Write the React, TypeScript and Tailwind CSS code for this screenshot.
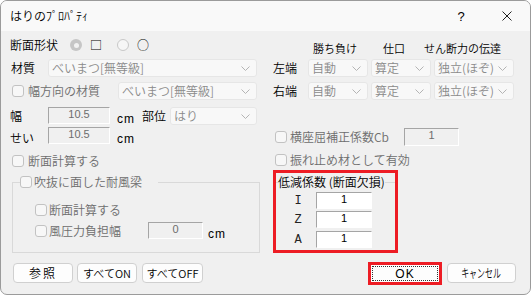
import React from "react";

function Chevron() {
  return (
    <svg width="9" height="5" viewBox="0 0 9 5" className="shrink-0">
      <path d="M0.5 0.5 L4.5 4.5 L8.5 0.5" fill="none" stroke="#b4b4b4" strokeWidth="1" />
    </svg>
  );
}

function Select({ text, className }: { text: string; className: string }) {
  return (
    <div
      className={`flex items-center justify-between bg-[#f8f8f8] border border-[#e6e6e6] rounded-[3px] pl-[3px] pr-[6px] text-[#8a8a8a] shrink-0 ${className}`}
    >
      <span className="whitespace-nowrap">{text}</span>
      <Chevron />
    </div>
  );
}

function Box() {
  return <span className="inline-block w-[12px] h-[12px] rounded-[3px] border border-[#c2c2c2] bg-[#f7f7f7] shrink-0" />;
}

function GrayField({ v, className }: { v: string; className: string }) {
  return (
    <div
      className={`flex justify-center items-start border border-t-[#a5a5a5] border-l-[#a5a5a5] border-r-[#ffffff] border-b-[#ffffff] bg-[#f0f0f0] text-[#6d6d6d] font-['Liberation_Sans',sans-serif] text-[11px] leading-[11px] pt-[1px] shrink-0 ${className}`}
    >
      {v}
    </div>
  );
}

function WhiteField({ v }: { v: string }) {
  return (
    <div className="flex justify-center items-start w-[56px] h-[17px] border border-t-[#a5a5a5] border-l-[#a5a5a5] border-r-[#ffffff] border-b-[#ffffff] bg-white text-black font-['Liberation_Sans',sans-serif] text-[11px] leading-[11px] pt-[1px] ml-[7px] shrink-0">
      {v}
    </div>
  );
}

function Btn({ label, className }: { label: React.ReactNode; className: string }) {
  return (
    <div
      className={`h-[20px] bg-[#fdfdfd] border border-[#d0d0d0] rounded-[4px] flex items-center justify-center text-black shrink-0 ${className}`}
    >
      {label}
    </div>
  );
}

function Cm() {
  return (
    <span className="font-['Liberation_Sans',sans-serif] text-[12px] tracking-[1px] mt-[6px] w-[25px] ml-[7px] shrink-0">cm</span>
  );
}

export default function App() {
  return (
    <div className="w-[531px] h-[295px] bg-[#f0f0f0] border border-[#9b9b9b] rounded-[7px] overflow-hidden flex flex-col font-['Noto_Sans_CJK_JP',sans-serif] font-[350] text-[12px] leading-none text-black">
      {/* title bar */}
      <div className="h-[30px] bg-[#f9f9f9] flex items-center shrink-0">
        <span className="pl-[9px] text-[12px]">はりのﾌﾟﾛﾊﾟﾃｨ</span>
        <div className="ml-auto flex h-full">
          <div className="w-[46px] h-full flex items-center justify-center text-[13px] font-['Liberation_Sans',sans-serif]">?</div>
          <div className="w-[46px] h-full flex items-center justify-center">
            <svg width="10" height="10" viewBox="0 0 10 10">
              <path d="M0.5 0.5 L9.5 9.5 M9.5 0.5 L0.5 9.5" stroke="#222" strokeWidth="1" />
            </svg>
          </div>
        </div>
      </div>

      {/* body */}
      <div className="flex flex-col pt-[5px]">
        <div className="flex">
          {/* left column */}
          <div className="w-[251px] ml-[9px] flex flex-col">
            <div className="h-[18px] flex items-center">
              <span className="w-[60px]">断面形状</span>
              <span className="w-[12px] h-[12px] rounded-full bg-[#c6c6c6] flex items-center justify-center shrink-0">
                <span className="w-[5px] h-[5px] rounded-full bg-[#f2f2f2]" />
              </span>
              <span className="ml-[8px] w-[27px] text-[12px]">□</span>
              <span className="w-[12px] h-[12px] rounded-full border border-[#c8c8c8] bg-[#f6f6f6] shrink-0" />
              <span className="ml-[8px] text-[12px]">○</span>
            </div>
            <div className="mt-[5px] h-[18px] flex items-center">
              <span className="w-[38px] pl-[1px]">材質</span>
              <Select text="べいまつ[無等級]" className="w-[209px] h-[18px]" />
            </div>
            <div className="mt-[5px] h-[18px] flex items-center">
              <span className="ml-[2px] flex"><Box /></span>
              <span className="ml-[4px] text-[#6d6d6d]">幅方向の材質</span>
              <Select text="べいまつ[無等級]" className="ml-auto mr-[4px] w-[139px] h-[18px]" />
            </div>
            <div className="mt-[7px] h-[18px] flex items-start">
              <span className="w-[38px] self-center">幅</span>
              <GrayField v="10.5" className="w-[62px] h-[17px]" />
              <Cm />
              <span className="w-[28px] self-center">部位</span>
              <Select text="はり" className="w-[87px] h-[18px]" />
            </div>
            <div className="mt-[2px] h-[17px] flex items-start">
              <span className="w-[38px] self-center mt-[4px]">せい</span>
              <GrayField v="10.5" className="w-[62px] h-[17px]" />
              <Cm />
            </div>
            <div className="mt-[8px] h-[18px] flex items-center">
              <span className="ml-[2px] flex"><Box /></span>
              <span className="ml-[4px] text-[#6d6d6d]">断面計算する</span>
            </div>
            <fieldset className="mt-[5px] ml-[2px] w-[248px] border border-[#d9d9d9] px-[7px] pb-[13px]">
              <legend className="h-[14px] flex items-center pr-[16px]">
                <Box />
                <span className="ml-[2px] text-[#6d6d6d]">吹抜に面した耐風梁</span>
              </legend>
              <div className="mt-[14px] h-[14px] flex items-center">
                <span className="ml-[15px] flex"><Box /></span>
                <span className="ml-[2px] text-[#6d6d6d]">断面計算する</span>
              </div>
              <div className="mt-[5px] h-[17px] flex items-start">
                <span className="ml-[15px] flex self-center"><Box /></span>
                <span className="ml-[2px] w-[99px] self-center text-[#6d6d6d]">風圧力負担幅</span>
                <GrayField v="0" className="w-[55px] h-[17px]" />
                <span className="font-['Liberation_Sans',sans-serif] text-[12px] tracking-[1px] mt-[6px] ml-[5px]">cm</span>
              </div>
            </fieldset>
          </div>

          {/* right column */}
          <div className="ml-[12px] w-[242px] flex flex-col">
            <div className="mt-[5px] h-[14px] flex items-center text-[11px]">
              <span className="ml-[40px] w-[70px]">勝ち負け</span>
              <span className="w-[41px]">仕口</span>
              <span>せん断力の伝達</span>
            </div>
            <div className="mt-[4px] h-[18px] flex items-center">
              <span className="w-[35px]">左端</span>
              <Select text="自動" className="w-[60px] h-[18px]" />
              <Select text="算定" className="ml-[3px] w-[60px] h-[18px]" />
              <Select text="独立(ほぞ)" className="ml-[3px] w-[80px] h-[18px]" />
            </div>
            <div className="mt-[5px] h-[18px] flex items-center">
              <span className="w-[35px]">右端</span>
              <Select text="自動" className="w-[60px] h-[18px]" />
              <Select text="算定" className="ml-[3px] w-[60px] h-[18px]" />
              <Select text="独立(ほぞ)" className="ml-[3px] w-[80px] h-[18px]" />
            </div>
            <div className="mt-[28px] h-[18px] flex items-center">
              <span className="ml-[2px] flex"><Box /></span>
              <span className="ml-[3px] w-[114px] text-[#6d6d6d] whitespace-nowrap">横座屈補正係数Cb</span>
              <GrayField v="1" className="w-[55px] h-[18px]" />
            </div>
            <div className="mt-[7px] h-[14px] flex items-center">
              <span className="ml-[2px] flex"><Box /></span>
              <span className="ml-[3px] text-[#6d6d6d]">振れ止め材として有効</span>
            </div>
            <div className="mt-[3px] w-[125px] h-[83px] border-[3px] border-[#ed1c24]">
              <fieldset className="mt-[1px] border-0 border-t border-[#d9d9d9] pl-[2px]">
                <legend className="h-[16px] flex items-center whitespace-nowrap">低減係数 (断面欠損)</legend>
                <div className="mt-[2px] h-[17px] flex items-center">
                  <span className="ml-[9px] w-[22px] text-center font-['Liberation_Mono',monospace] text-[12px] text-[#222]">I</span>
                  <WhiteField v="1" />
                </div>
                <div className="mt-[2px] h-[17px] flex items-center">
                  <span className="ml-[9px] w-[22px] text-center font-['Liberation_Mono',monospace] text-[12px] text-[#222]">Z</span>
                  <WhiteField v="1" />
                </div>
                <div className="mt-[3px] h-[17px] flex items-center">
                  <span className="ml-[9px] w-[22px] text-center font-['Liberation_Mono',monospace] text-[12px] text-[#222]">A</span>
                  <WhiteField v="1" />
                </div>
              </fieldset>
            </div>
          </div>
        </div>

        {/* buttons */}
        <div className="mt-[9px] flex items-start pl-[12px] pr-[14px]">
          <Btn label="参照" className="mt-[1px] w-[60px] tracking-[2px]" />
          <Btn label="すべてON" className="mt-[1px] ml-[4px] w-[60px] text-[11px]" />
          <Btn label="すべてOFF" className="mt-[1px] ml-[5px] w-[61px] text-[11px]" />
          <div className="ml-auto w-[74px] h-[23px] border-[3px] border-[#ed1c24] shrink-0">
            <div className="w-full h-full bg-[#fdfdfd] p-[1px]">
              <div className="w-full h-full border border-dotted border-[#333] flex items-center justify-center font-['Liberation_Sans',sans-serif] text-[12px] tracking-[1px]">
                OK
              </div>
            </div>
          </div>
          <Btn
            label={<span className="inline-block scale-x-[0.66] whitespace-nowrap">キャンセル</span>}
            className="mt-[1px] ml-[5px] w-[69px]"
          />
        </div>
      </div>
    </div>
  );
}
